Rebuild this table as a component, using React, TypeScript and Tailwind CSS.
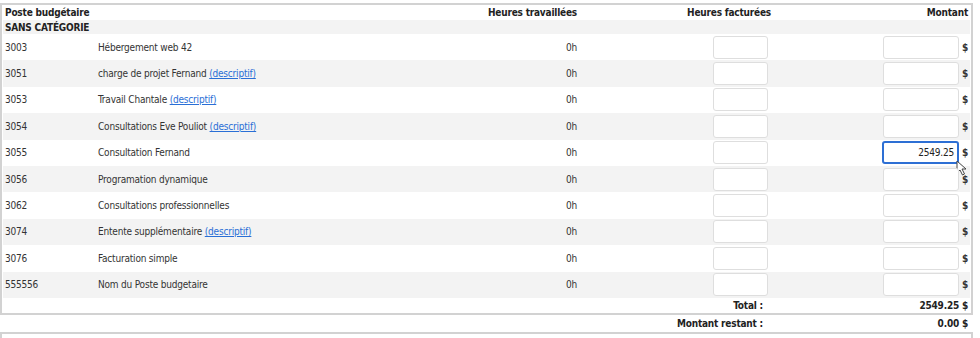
import React from "react";

type Row = { code: string; desc: string; link?: boolean; value?: string; focused?: boolean };

const rows: Row[] = [
  { code: "3003", desc: "Hébergement web 42" },
  { code: "3051", desc: "charge de projet Fernand", link: true },
  { code: "3053", desc: "Travail Chantale", link: true },
  { code: "3054", desc: "Consultations Eve Pouliot", link: true },
  { code: "3055", desc: "Consultation Fernand", value: "2549.25", focused: true },
  { code: "3056", desc: "Programation dynamique" },
  { code: "3062", desc: "Consultations professionnelles" },
  { code: "3074", desc: "Entente supplémentaire", link: true },
  { code: "3076", desc: "Facturation simple" },
  { code: "555556", desc: "Nom du Poste budgetaire" },
];

const font = { fontFamily: "'DejaVu Sans Condensed', 'DejaVu Sans', Tahoma, sans-serif" };

export default function App() {
  return (
    <div className="w-[980px] h-[338px] overflow-hidden bg-white text-[10px] tracking-[-0.2px] text-[#333] whitespace-nowrap" style={font}>
      <div className="mt-[3px] w-[973px] border-2 border-[#d2d2d2] px-[1px]">
        <div className="flex h-[15px] items-center font-bold text-[#222]">
          <div className="w-[95px] pl-[2px]">Poste budgétaire</div>
          <div className="w-[383px]" />
          <div className="w-[98px] text-right pr-[2px]">Heures travaillées</div>
          <div className="w-[194px] text-right pr-[2px]">Heures facturées</div>
          <div className="flex-1 text-right pr-[2px]">Montant</div>
        </div>
        <div className="flex h-[14px] items-center bg-[#f3f3f3] pl-[2px] font-bold text-[#222]">SANS CATÉGORIE</div>
        {rows.map((r, i) => (
          <div key={r.code} className={`flex h-[26.4px] items-center ${i % 2 === 1 ? "bg-[#f3f3f3]" : "bg-white"}`}>
            <div className="w-[95px] pl-[2px]">{r.code}</div>
            <div className="w-[383px]">
              {r.desc}
              {r.link && (
                <>
                  {" "}
                  <a className="text-[#2a6fd6] underline">(descriptif)</a>
                </>
              )}
            </div>
            <div className="w-[98px] text-right pr-[2px]">0h</div>
            <div className="w-[194px] flex justify-end pr-[5px]">
              <div className="h-[23px] w-[55px] rounded-[3px] border border-[#dedede] bg-white" />
            </div>
            <div className="flex-1 flex items-center justify-end pr-[2px]">
              <div className="relative">
                {r.focused ? (
                  <div className="flex h-[23px] w-[77px] items-center justify-end rounded-[3px] border-2 border-[#2d6fd4] bg-white pr-[3px] text-[#222]">
                    {r.value}
                  </div>
                ) : (
                  <div className="h-[23px] w-[76px] rounded-[3px] border border-[#dedede] bg-white" />
                )}
                {r.focused && (
                  <svg className="absolute left-[74px] top-[19px]" width="11" height="16" viewBox="0 0 11 16">
                    <path d="M1 1 L1 13 L4 10 L6.5 15 L8.5 14 L6 9 L10 9 Z" fill="white" stroke="#444" strokeWidth="1" strokeLinejoin="round" />
                  </svg>
                )}
              </div>
              <span className="ml-[3px] font-bold text-[#333]">$</span>
            </div>
          </div>
        ))}
        <div className="flex h-[15px] items-center font-bold text-[#222]">
          <div className="w-[95px]" />
          <div className="w-[383px]" />
          <div className="w-[98px]" />
          <div className="w-[194px] text-right pr-[10px]">Total :</div>
          <div className="flex-1 text-right pr-[2px]">2549.25 $</div>
        </div>
      </div>
      <div className="flex h-[17px] w-[973px] items-center font-bold text-[#222] px-[1px]">
        <div className="w-[95px]" />
        <div className="w-[383px]" />
        <div className="w-[98px]" />
        <div className="w-[196px] text-right pr-[10px]">Montant restant :</div>
        <div className="flex-1 text-right pr-[4px]">0.00 $</div>
      </div>
      <div className="w-[973px] h-[20px] border-2 border-[#d2d2d2]" />
    </div>
  );
}
